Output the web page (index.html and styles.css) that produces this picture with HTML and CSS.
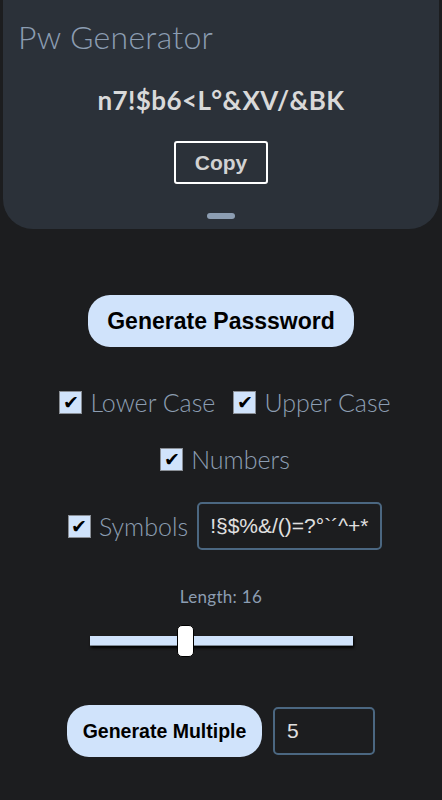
FILE: index.html
```html
<!DOCTYPE html>
<html>
<head>
  <title>Pw Generator</title>
  <link rel="stylesheet" href="styles.css">
</head>
<body>
  <div id="header">
    <div class="title">Pw Generator</div>
    <div class="password">n7!$b6&lt;L°&amp;XV/&amp;BK</div>
    <button class="copy-button">Copy</button>
    <div class="handle"></div>
  </div>

  <div id="content">
    <button class="pill-button generate">Generate Passsword</button>

    <div class="option-row row-one">
      <label class="option"><span class="box">✔</span>Lower Case</label>
      <label class="option"><span class="box">✔</span>Upper Case</label>
    </div>

    <div class="option-row row-two">
      <label class="option"><span class="box">✔</span>Numbers</label>
    </div>

    <div class="option-row row-three">
      <label class="option"><span class="box">✔</span>Symbols</label>
      <input type="text" class="field symbols" value="!§$%&amp;/()=?°`´^+*">
    </div>

    <div class="length-label">Length: 16</div>
    <input type="range" class="slider" min="6" max="34" value="16">

    <div class="multiple-row">
      <button class="pill-button multiple">Generate Multiple</button>
      <input type="text" class="field count" value="5">
    </div>
  </div>
</body>
</html>
```

FILE: styles.css
```css
body {
  margin: 0;
  background-color: #1c1d1f;
  font-family: Lato, "Liberation Sans", sans-serif;
  width: 442px;
  height: 800px;
  overflow: hidden;
}

#header {
  margin: 0 3px;
  height: 229px;
  background-color: #2b3139;
  border-radius: 0 0 30px 30px;
  display: flex;
  flex-direction: column;
  align-items: center;
  box-sizing: border-box;
  padding-top: 19px;
}

#header .title {
  align-self: flex-start;
  padding-left: 15px;
  font-size: 32px;
  font-weight: 300;
  letter-spacing: 0.3px;
  line-height: 36px;
  color: #8c9db2;
}

#header .password {
  margin-top: 30px;
  font-size: 26px;
  font-weight: 700;
  letter-spacing: 0.4px;
  line-height: 30px;
  color: #d9d9d9;
}

#header .copy-button {
  margin-top: 26px;
  width: 94px;
  height: 43px;
  background: transparent;
  border: 2px solid #ffffff;
  border-radius: 3px;
  font-family: "Liberation Sans", Arial, sans-serif;
  font-weight: 700;
  font-size: 21px;
  color: #d2d2d2;
}

#header .handle {
  margin-top: 29px;
  width: 28px;
  height: 6px;
  border-radius: 3px;
  background-color: #8c9db2;
}

#content {
  display: flex;
  flex-direction: column;
  align-items: center;
  padding-top: 66px;
}

.pill-button {
  background-color: #d0e3fb;
  border: none;
  border-radius: 22px;
  font-family: "Liberation Sans", Arial, sans-serif;
  font-weight: 700;
  color: #000000;
}

.pill-button.generate {
  width: 266px;
  height: 52px;
  font-size: 23px;
}

.option-row {
  display: flex;
  align-items: center;
  justify-content: center;
  margin-left: 8px;
}

.row-one {
  margin-top: 39px;
  gap: 18px;
}

.row-two {
  margin-top: 25px;
}

.row-three {
  margin-top: 27px;
  gap: 9px;
}

.option {
  display: flex;
  align-items: center;
  font-size: 25px;
  font-weight: 300;
  color: #8c9db2;
  line-height: 32px;
}

.option .box {
  width: 21px;
  height: 21px;
  margin-right: 8px;
  background-color: #d0e3fb;
  border: 1px solid #8a8f96;
  display: flex;
  align-items: center;
  justify-content: center;
  font-family: "DejaVu Sans", sans-serif;
  font-size: 19px;
  line-height: 1;
  color: #000000;
}

.field {
  box-sizing: border-box;
  background-color: #1c1d1f;
  border: 2px solid #4b6781;
  border-radius: 5px;
  font-family: "Liberation Sans", Arial, sans-serif;
  color: #e0e0e0;
  outline: none;
}

.field.symbols {
  width: 185px;
  height: 48px;
  font-size: 21px;
  padding: 0 0 0 11px;
}

.length-label {
  margin-top: 37px;
  font-size: 17px;
  letter-spacing: 0.3px;
  color: #8c9db2;
  line-height: 20px;
}

.slider {
  -webkit-appearance: none;
  appearance: none;
  margin: 18px 0 0 0;
  width: 263px;
  height: 32px;
  background: transparent;
}

.slider::-webkit-slider-runnable-track {
  height: 10px;
  background-color: #d0e3fb;
  border-bottom: 1px solid #7f8a96;
  box-shadow: 1px 2px 3px #000000;
}

.slider::-webkit-slider-thumb {
  -webkit-appearance: none;
  width: 17px;
  height: 32px;
  margin-top: -11px;
  background-color: #ffffff;
  border: 1px solid #000000;
  border-radius: 5px;
  box-sizing: border-box;
}

.multiple-row {
  margin-top: 48px;
  display: flex;
  align-items: center;
  gap: 11px;
}

.pill-button.multiple {
  width: 195px;
  height: 52px;
  font-size: 19.5px;
}

.field.count {
  width: 102px;
  height: 48px;
  font-size: 21px;
  padding: 0 0 0 12px;
}
```
